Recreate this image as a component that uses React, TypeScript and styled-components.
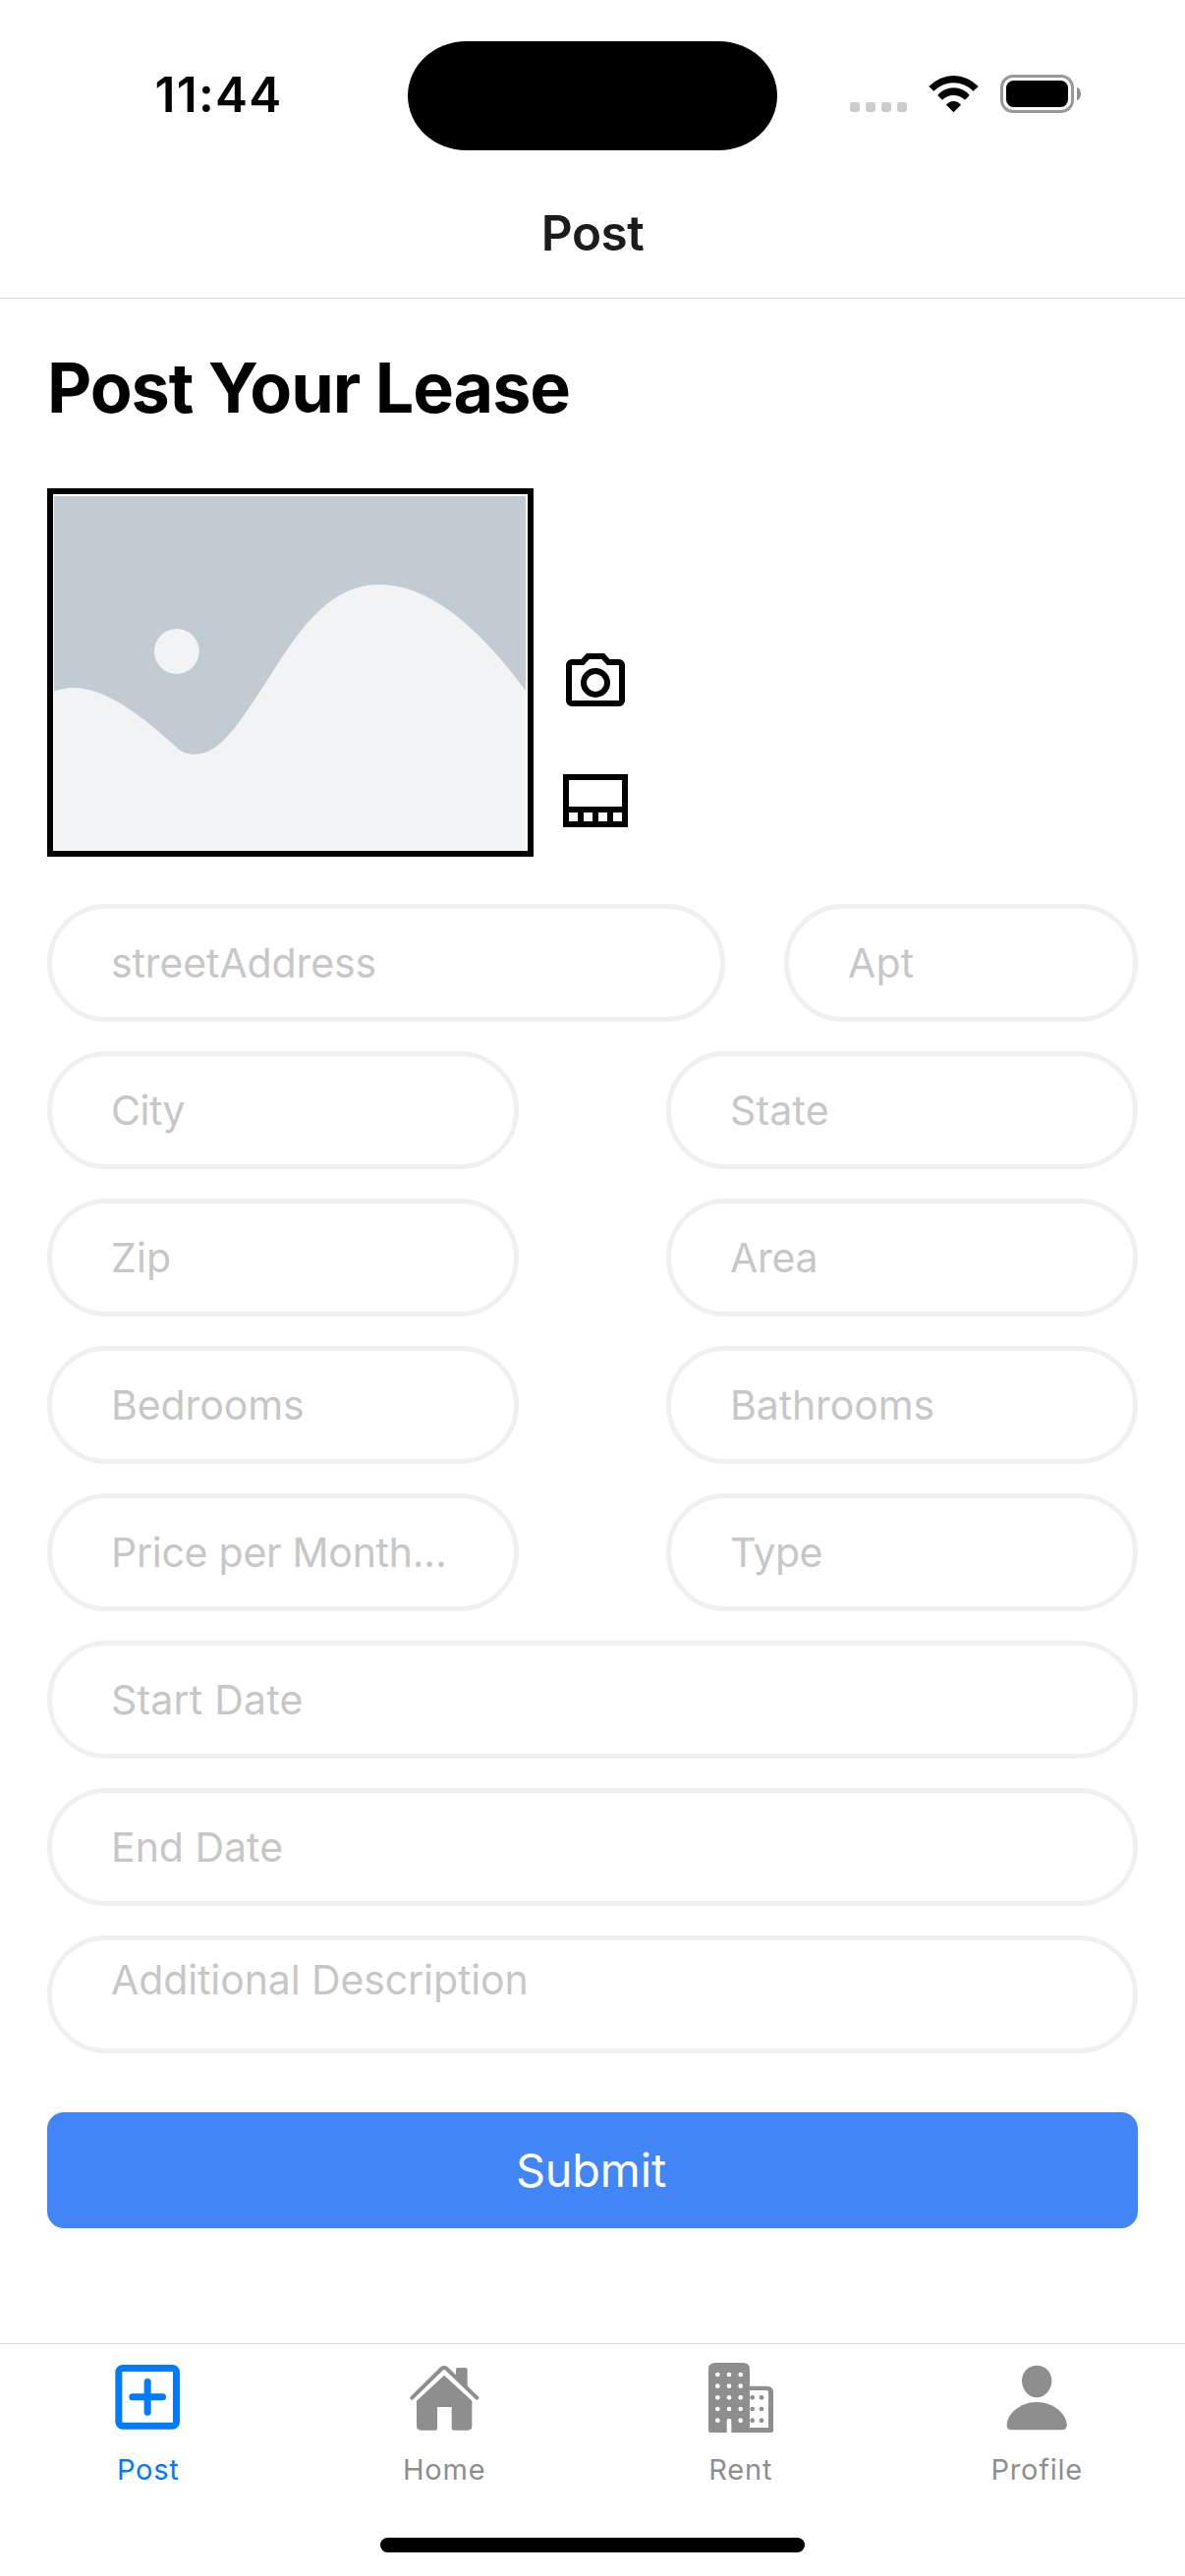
import React from "react";
import styled, { createGlobalStyle } from "styled-components";

const GlobalStyle = createGlobalStyle`
  *, *::before, *::after { box-sizing: border-box; }
  html, body { margin: 0; padding: 0; background: #ffffff; }
  body { font-family: Inter, "Liberation Sans", sans-serif; color: #000000; overflow: hidden; }
  svg { display: block; flex: none; }
`;

const Screen = styled.div`
  width: 1206px;
  height: 2622px;
  display: flex;
  flex-direction: column;
  background: #ffffff;
`;

const StatusBar = styled.header`
  height: 177px;
  flex: none;
  display: grid;
  grid-template-columns: 415px 376px 1fr;
  align-items: start;
`;

const Clock = styled.div`
  margin-top: 66px;
  padding-left: 157.5px;
  font-size: 49.5px;
  line-height: 60px;
  font-weight: 600;
  letter-spacing: 1.3px;
  white-space: nowrap;
`;

const Island = styled.div`
  margin-top: 41.5px;
  height: 111px;
  border-radius: 60px / 56px;
  background: #000000;
`;

const StatusIcons = styled.div`
  display: flex;
  align-items: flex-start;
  margin-top: 76px;
  padding-left: 74px;
`;

const SignalDots = styled.div`
  display: flex;
  gap: 6px;
  margin-top: 28px;
  margin-right: 22px;
`;

const SignalDot = styled.i`
  width: 10px;
  height: 10px;
  border-radius: 3px;
  background: #cccccc;
`;

const Battery = styled.div`
  display: flex;
  align-items: center;
  gap: 3px;
  height: 39px;
  margin-left: 22px;
`;

const BatteryShell = styled.div`
  width: 75px;
  height: 39px;
  padding: 3px;
  border: 3px solid #999999;
  border-radius: 13px;
`;

const BatteryLevel = styled.div`
  height: 100%;
  border-radius: 7.5px;
  background: #000000;
`;

const BatteryCap = styled.div`
  width: 4px;
  height: 13px;
  border-radius: 0 4px 4px 0 / 0 6.5px 6.5px 0;
  background: #8f8f8f;
`;

const NavHeader = styled.div`
  height: 127px;
  flex: none;
  display: flex;
  justify-content: center;
  padding-top: 30px;
  border-bottom: 1px solid #d8d8d8;
`;

const NavTitle = styled.div`
  font-size: 49.5px;
  line-height: 60px;
  font-weight: 600;
  color: #1c1c1e;
  letter-spacing: -0.5px;
`;

const Content = styled.main`
  flex: 1;
  display: flex;
  flex-direction: column;
  padding: 48px 48px 0;
`;

const Heading = styled.h1`
  margin: 0;
  height: 145px;
  font-size: 70px;
  line-height: 86px;
  font-weight: 700;
  letter-spacing: -1.05px;
  white-space: nowrap;
`;

const PhotoRow = styled.section`
  display: flex;
  gap: 27px;
  height: 375px;
  margin-bottom: 48px;
`;

const PhotoFrame = styled.div`
  width: 495px;
  height: 375px;
  padding: 2px 2px 1px 1px;
  border: 6px solid #000000;
`;

const PhotoActions = styled.div`
  display: flex;
  flex-direction: column;
  justify-content: flex-end;
  gap: 48px;
  padding-bottom: 21px;
`;

const IconButton = styled.button`
  display: block;
  padding: 0;
  border: 0;
  background: none;
  color: #000000;
`;

const Form = styled.form`
  display: flex;
  flex-direction: column;
  gap: 30px;
`;

const FieldRow = styled.div<{ $columns: string }>`
  display: grid;
  grid-template-columns: ${(p) => p.$columns};
  justify-content: space-between;
`;

const Field = styled.div<{ $multiline?: boolean; $tracking?: number }>`
  height: 120px;
  padding: ${(p) => (p.$multiline ? "15px" : "30px")} 55px 0 60px;
  border: 5px solid #eff0f2;
  border-radius: 60px;
  font-size: 41px;
  line-height: 50px;
  color: #c7c7c8;
  letter-spacing: ${(p) => p.$tracking ?? -0.1}px;
  white-space: nowrap;
`;

const SubmitButton = styled.button`
  height: 118px;
  margin-top: 30px;
  padding: 0 3px 0 0;
  border: 0;
  border-radius: 17px;
  background: #4285f6;
  color: #ffffff;
  font-family: inherit;
  font-size: 46.8px;
  line-height: 58px;
  letter-spacing: -0.15px;
`;

const TabBar = styled.nav`
  height: 237px;
  flex: none;
  display: flex;
  flex-direction: column;
  justify-content: space-between;
  align-items: center;
  border-top: 1px solid #d8d8d8;
  padding: 18px 0 24px;
`;

const Tabs = styled.div`
  width: 100%;
  display: grid;
  grid-template-columns: repeat(4, 1fr);
`;

const Tab = styled.div<{ $active?: boolean }>`
  display: flex;
  flex-direction: column;
  align-items: center;
  color: ${(p) => (p.$active ? "#007aff" : "#8e8e8f")};
`;

const TabLabel = styled.span`
  margin-top: 20px;
  font-size: 29px;
  line-height: 36px;
  letter-spacing: 0.8px;
`;

const HomeIndicator = styled.div`
  width: 432px;
  height: 15px;
  border-radius: 7.5px;
  background: #000000;
`;

const WifiIcon = () => (
  <svg width="51" height="39" viewBox="0 0 51 39" fill="#000">
    <path d="M.3 12A34.4 34.4 0 0 1 50.7 12L45.6 16.8A28 28 0 0 0 5.4 16.8Z" />
    <path d="M9.2 21A21.1 21.1 0 0 1 41.8 21L37 25.8A16.4 16.4 0 0 0 14 25.8Z" />
    <path d="M18 30.7A9.5 9.5 0 0 1 33 30.7L25.5 38.2Z" />
  </svg>
);

const Placeholder = () => (
  <svg width="480" height="360" viewBox="0 0 480 360">
    <rect width="480" height="360" fill="#c2cad2" />
    <circle cx="124.8" cy="158" r="22.9" fill="#f1f3f5" />
    <path
      d="M0 198.500C7 196.300 13 195 19.300 195C54 195 92 226 125 256C131 261.500 137 262.700 143.300 262.700C170 262.700 190 228 214.300 191.700C245 144 276 90 331 90C382 90 432 133 480 198V360H0Z"
      fill="#f1f3f5"
    />
  </svg>
);

const CameraIcon = () => (
  <svg width="72" height="72" viewBox="0 0 24 24" fill="currentColor">
    <path d="M20,4H16.83L15,2H9L7.17,4H4A2,2 0 0,0 2,6V18A2,2 0 0,0 4,20H20A2,2 0 0,0 22,18V6A2,2 0 0,0 20,4M20,18H4V6H8.05L9.88,4H14.12L15.95,6H20V18M12,7A5,5 0 0,0 7,12A5,5 0 0,0 12,17A5,5 0 0,0 17,12A5,5 0 0,0 12,7M12,15A3,3 0 0,1 9,12A3,3 0 0,1 12,9A3,3 0 0,1 15,12A3,3 0 0,1 12,15Z" />
  </svg>
);

const GalleryIcon = () => (
  <svg width="72" height="72" viewBox="0 0 24 24" fill="currentColor" fillRule="evenodd">
    <path d="M1 3H23V21H1ZM3 5V14H21V5ZM3 16V19H6V16ZM8 16V19H11V16ZM13 16V19H16V16ZM18 16V19H21V16Z" />
  </svg>
);

const PostIcon = () => (
  <svg width="72" height="72" viewBox="0 0 216 216" fill="none" stroke="currentColor" strokeWidth="21" strokeLinecap="round">
    <rect x="17.5" y="19.5" width="176" height="176" rx="12" />
    <path d="M59.5 107.5H151.5M105.5 61.5V153.5" />
  </svg>
);

const HomeIcon = () => (
  <svg width="72" height="72" viewBox="0 0 216 216" fill="currentColor">
    <path d="M10 110L101 20.5Q108 14.500 115 20.500L208 110" fill="none" stroke="currentColor" strokeWidth="12" strokeLinecap="round" />
    <path d="M144 48V24Q144 18 150 18H173Q179 18 179 24V82Z" />
    <path d="M108 41L193 119V196Q193 209 180 209H137Q131 209 131 203V138H87V203Q87 209 81 209H37Q24 209 24 196V119Z" />
  </svg>
);

const DOT_ROWS = [39, 74, 109, 144, 179];
const DOT_COLS = [37, 72, 107];

const RentIcon = () => (
  <svg width="72" height="72" viewBox="0 0 216 216" fill="currentColor">
    <path
      fillRule="evenodd"
      d="M130 74H187Q207 74 207 94V210Q207 216 201 216H130ZM130 87V201H192V93Q192 87 186 87Z"
    />
    <path d="M29 3H115Q135 3 135 23V216H79V180Q79 173 72 173Q65 173 65 180V216H15Q9 216 9 210V23Q9 3 29 3Z" />
    {DOT_ROWS.map((y) =>
      DOT_COLS.filter((x) => !(y === 179 && x === 72)).map((x) => (
        <circle key={`${x}-${y}`} cx={x} cy={y} r="7" fill="#fff" />
      ))
    )}
    {DOT_ROWS.slice(2).map((y) => (
      <g key={y}>
        <circle cx="143" cy={y} r="7" />
        <circle cx="171" cy={y} r="7" />
      </g>
    ))}
  </svg>
);

const ProfileIcon = () => (
  <svg width="72" height="72" viewBox="0 0 216 216" fill="currentColor">
    <path d="M108.500 11C134 11 154 31 154 57C154 85 134 109 108.500 109C83 109 63 85 63 57C63 31 83 11 108.500 11Z" />
    <path d="M31 208C22 208 17 203 17 193C17 162 55 123 108.500 123C162 123 200 162 200 193C200 203 195 208 186 208Z" />
  </svg>
);

const HALVES = "480px 480px";

type FieldSpec = { label: string; tracking?: number };

const ROWS: { columns: string; fields: FieldSpec[] }[] = [
  { columns: "690px 360px", fields: [{ label: "streetAddress" }, { label: "Apt", tracking: 0.2 }] },
  { columns: HALVES, fields: [{ label: "City", tracking: -0.5 }, { label: "State", tracking: 0.2 }] },
  { columns: HALVES, fields: [{ label: "Zip", tracking: 0.2 }, { label: "Area", tracking: -0.3 }] },
  { columns: HALVES, fields: [{ label: "Bedrooms" }, { label: "Bathrooms" }] },
  { columns: HALVES, fields: [{ label: "Price per Month...", tracking: -0.25 }, { label: "Type", tracking: -0.5 }] },
  { columns: "1fr", fields: [{ label: "Start Date", tracking: 0.2 }] },
  { columns: "1fr", fields: [{ label: "End Date", tracking: 0 }] },
];

const TABS = [
  { label: "Post", Icon: PostIcon },
  { label: "Home", Icon: HomeIcon },
  { label: "Rent", Icon: RentIcon },
  { label: "Profile", Icon: ProfileIcon },
];

export default function App() {
  return (
    <Screen>
      <GlobalStyle />
      <StatusBar>
        <Clock>11:44</Clock>
        <Island />
        <StatusIcons>
          <SignalDots>
            <SignalDot />
            <SignalDot />
            <SignalDot />
            <SignalDot />
          </SignalDots>
          <WifiIcon />
          <Battery>
            <BatteryShell>
              <BatteryLevel />
            </BatteryShell>
            <BatteryCap />
          </Battery>
        </StatusIcons>
      </StatusBar>
      <NavHeader>
        <NavTitle>Post</NavTitle>
      </NavHeader>
      <Content>
        <Heading>Post Your Lease</Heading>
        <PhotoRow>
          <PhotoFrame>
            <Placeholder />
          </PhotoFrame>
          <PhotoActions>
            <IconButton type="button" aria-label="Camera">
              <CameraIcon />
            </IconButton>
            <IconButton type="button" aria-label="Gallery">
              <GalleryIcon />
            </IconButton>
          </PhotoActions>
        </PhotoRow>
        <Form>
          {ROWS.map((row) => (
            <FieldRow key={row.fields[0].label} $columns={row.columns}>
              {row.fields.map(({ label, tracking }) => (
                <Field key={label} $tracking={tracking}>
                  {label}
                </Field>
              ))}
            </FieldRow>
          ))}
          <Field $multiline>Additional Description</Field>
          <SubmitButton type="button">Submit</SubmitButton>
        </Form>
      </Content>
      <TabBar>
        <Tabs>
          {TABS.map(({ label, Icon }, i) => (
            <Tab key={label} $active={i === 0}>
              <Icon />
              <TabLabel>{label}</TabLabel>
            </Tab>
          ))}
        </Tabs>
        <HomeIndicator />
      </TabBar>
    </Screen>
  );
}
